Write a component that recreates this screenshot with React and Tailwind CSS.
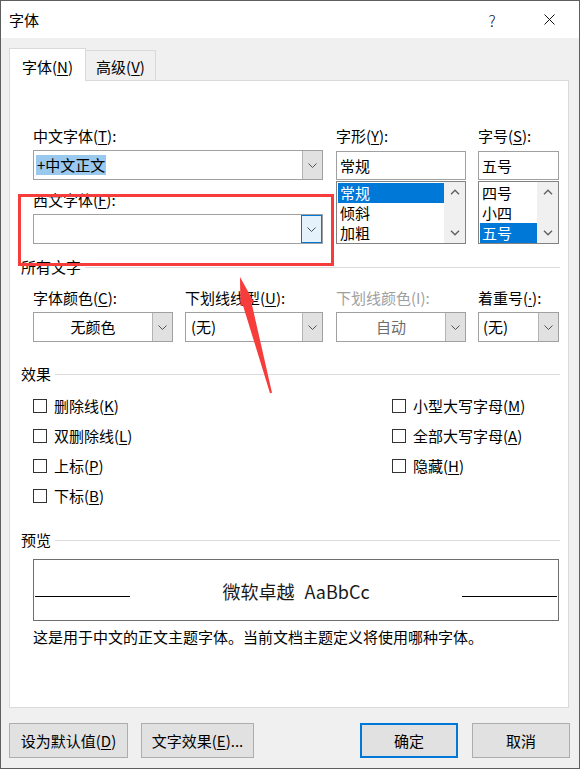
import React from "react";

function U({ children }) {
  return <span className="underline underline-offset-[2px] decoration-[1px]">{children}</span>;
}

function Chevron({ up, big }) {
  if (big) {
    return (
      <svg width="10" height="6" viewBox="0 0 10 6">
        <path d={up ? "M1 5.2 L5 1.2 L9 5.2" : "M1 0.8 L5 4.8 L9 0.8"} fill="none" stroke="#606060" strokeWidth="1.4" />
      </svg>
    );
  }
  return (
    <svg width="9" height="5" viewBox="0 0 9 5">
      <path d="M0.5 0.5 L4.5 4.5 L8.5 0.5" fill="none" stroke="#505050" strokeWidth="1" />
    </svg>
  );
}

function Combo({ w, children, focused, align }) {
  return (
    <div className={`flex h-[30px] border border-[#a0a0a0] bg-white ${w}`}>
      <div className={`flex flex-1 items-center ${align}`}>{children}</div>
      {focused ? (
        <div className="flex w-[21px] items-center justify-center border border-[#0078d7] bg-[#e5f1fb]">
          <Chevron />
        </div>
      ) : (
        <div className="flex w-[20px] items-center justify-center border-l border-[#b4b4b4] bg-[#e1e1e1]">
          <Chevron />
        </div>
      )}
    </div>
  );
}

function ListBox({ w, items, sel }) {
  return (
    <div className={`mt-[1px] flex h-[63px] border border-[#828282] bg-white ${w}`}>
      <div className="flex flex-1 flex-col pl-[1px] pt-[1px]">
        {items.map((t, i) => (
          <div
            key={t}
            className={
              i === sel
                ? "flex h-[20px] items-center bg-[#0078d7] pl-[2px] text-white"
                : "flex h-[20px] items-center pl-[2px]"
            }
          >
            {t}
          </div>
        ))}
      </div>
      <div className="flex w-[21px] flex-col justify-between bg-[#f0f0f0]">
        <div className="flex h-[20px] items-center justify-center">
          <Chevron up big />
        </div>
        <div className="flex h-[20px] items-center justify-center">
          <Chevron big />
        </div>
      </div>
    </div>
  );
}

function TextBox({ w, children }) {
  return (
    <div className={`mt-[5px] flex h-[29px] items-center border border-[#a0a0a0] bg-white pl-[3px] ${w}`}>
      {children}
    </div>
  );
}

function Header({ children }) {
  return (
    <div className="flex h-[20px] items-center">
      <span>{children}</span>
      <div className="ml-[4px] h-px flex-1 bg-[#dcdcdc]" />
    </div>
  );
}

function Check({ children }) {
  return (
    <div className="flex h-[30px] items-center">
      <div className="h-[14px] w-[14px] border border-[#333333] bg-white" />
      <span className="ml-[7px]">{children}</span>
    </div>
  );
}

function Btn({ w, children, primary, extra }) {
  return (
    <div
      className={`flex h-[35px] items-center justify-center bg-[#e1e1e1] ${w} ${extra} ${
        primary ? "border-2 border-[#0078d7]" : "border border-[#adadad]"
      }`}
    >
      {children}
    </div>
  );
}

export default function App() {
  return (
    <div className="relative h-[769px] w-[580px] overflow-hidden font-['Noto_Sans_CJK_SC','Noto_Sans',sans-serif] text-[15px] leading-[20px] text-black">
      <div className="flex h-full w-full flex-col border border-[#5f5f5f] bg-[#f0f0f0]">
        {/* title bar */}
        <div className="flex h-[37px] shrink-0 items-center bg-white pl-[8px] pr-[24px]">
          <span>字体</span>
          <span className="ml-auto w-[20px] text-center text-[16px] font-light text-[#111]">?</span>
          <svg className="ml-[42px]" width="11" height="11" viewBox="0 0 11 11">
            <path d="M0.5 0.5 L10.5 10.5 M10.5 0.5 L0.5 10.5" stroke="#111" strokeWidth="1" />
          </svg>
        </div>

        {/* tabs */}
        <div className="mt-[10px] flex items-end pl-[8px]">
          <div className="relative z-10 -mb-px flex h-[33px] w-[77px] justify-center border-l border-r border-t border-[#d9d9d9] bg-white pt-[8px]">
            字体(<U>N</U>)
          </div>
          <div className="flex h-[30px] w-[70px] justify-center border-r border-t border-[#d9d9d9] bg-[#f0f0f0] pt-[6px]">
            高级(<U>V</U>)
          </div>
        </div>

        {/* panel */}
        <div className="ml-[8px] flex h-[628px] w-[560px] flex-col border border-[#d9d9d9] bg-white pl-[11px] pr-[8px]">
          <div className="ml-[12px] mt-[45px] flex">
            <div className="flex w-[290px] flex-col">
              <div>
                中文字体(<U>T</U>):
              </div>
              <div className="mt-[4px]">
                <Combo w="w-[290px]" align="">
                  <span className="ml-[2px] bg-[#99c9ef] px-[1px] leading-[20px]">+中文正文</span>
                </Combo>
              </div>
              <div className="mt-[10px]">
                西文字体(<U>F</U>):
              </div>
              <div className="mt-[4px]">
                <Combo w="w-[290px]" focused align="" />
              </div>
            </div>
            <div className="ml-[13px] flex w-[130px] flex-col">
              <div>
                字形(<U>Y</U>):
              </div>
              <TextBox w="w-[130px]">常规</TextBox>
              <ListBox w="w-[130px]" items={["常规", "倾斜", "加粗"]} sel={0} />
            </div>
            <div className="ml-[12px] flex w-[81px] flex-col">
              <div>
                字号(<U>S</U>):
              </div>
              <TextBox w="w-[81px]">五号</TextBox>
              <ListBox w="w-[81px]" items={["四号", "小四", "五号"]} sel={2} />
            </div>
          </div>

          <div className="mt-[13px]">
            <Header>所有文字</Header>
          </div>

          <div className="ml-[12px] mt-[11px] flex">
            <div className="flex w-[140px] flex-col">
              <div>
                字体颜色(<U>C</U>):
              </div>
              <div className="mt-[4px]">
                <Combo w="w-[140px]" align="justify-center">无颜色</Combo>
              </div>
            </div>
            <div className="ml-[12px] flex w-[138px] flex-col">
              <div>
                下划线线型(<U>U</U>):
              </div>
              <div className="mt-[4px]">
                <Combo w="w-[138px]" align="pl-[5px]">(无)</Combo>
              </div>
            </div>
            <div className="ml-[13px] flex w-[130px] flex-col">
              <div className="text-[#a0a0a0]">下划线颜色(I):</div>
              <div className="mt-[4px]">
                <Combo w="w-[130px]" align="justify-center text-[#6d6d6d]">自动</Combo>
              </div>
            </div>
            <div className="ml-[12px] flex w-[81px] flex-col">
              <div>
                着重号(
                <span className="font-['Noto_Sans',sans-serif] underline underline-offset-[2px] decoration-[1px]">·</span>
                ):
              </div>
              <div className="mt-[4px]">
                <Combo w="w-[81px]" align="pl-[4px]">(无)</Combo>
              </div>
            </div>
          </div>

          <div className="mt-[22px]">
            <Header>效果</Header>
          </div>

          <div className="ml-[12px] mt-[7px] grid grid-cols-[359px_1fr]">
            <Check>
              删除线(<U>K</U>)
            </Check>
            <Check>
              小型大写字母(<U>M</U>)
            </Check>
            <Check>
              双删除线(<U>L</U>)
            </Check>
            <Check>
              全部大写字母(<U>A</U>)
            </Check>
            <Check>
              上标(<U>P</U>)
            </Check>
            <Check>
              隐藏(<U>H</U>)
            </Check>
            <Check>
              下标(<U>B</U>)
            </Check>
          </div>

          <div className="mt-[19px]">
            <Header>预览</Header>
          </div>

          <div className="ml-[12px] mt-[9px] flex h-[62px] w-[526px] border border-[#6d6d6d] px-[1px]">
            <div className="mt-[36px] h-px w-[95px] bg-black" />
            <div className="flex flex-1 justify-center gap-[10px] pt-[19px] text-[18px] leading-[24px] text-[#1a1a1a]">
              <span>微软卓越</span>
              <span>AaBbCc</span>
            </div>
            <div className="mt-[36px] h-px w-[95px] bg-black" />
          </div>

          <div className="ml-[12px] mt-[6px]">这是用于中文的正文主题字体。当前文档主题定义将使用哪种字体。</div>
        </div>

        {/* buttons */}
        <div className="mt-[15px] flex pl-[8px] pr-[9px]">
          <Btn w="w-[119px]">
            设为默认值(<U>D</U>)
          </Btn>
          <Btn w="w-[113px]" extra="ml-[13px]">
            文字效果(<U>E</U>)...
          </Btn>
          <Btn w="w-[98px]" extra="ml-auto" primary>
            确定
          </Btn>
          <Btn w="w-[98px]" extra="ml-[14px]">
            取消
          </Btn>
        </div>
      </div>

      {/* red annotation overlay */}
      <svg className="pointer-events-none absolute left-0 top-0" width="580" height="769" viewBox="0 0 580 769">
        <rect x="19.5" y="195.5" width="313" height="69" fill="none" stroke="#f73c3c" strokeWidth="3" />
        <polygon
          points="240,277 254,302.2 251.5,302.8 272,392.7 270,393.3 242.9,305.2 240.4,305.8"
          fill="#f73c3c"
        />
      </svg>
    </div>
  );
}
